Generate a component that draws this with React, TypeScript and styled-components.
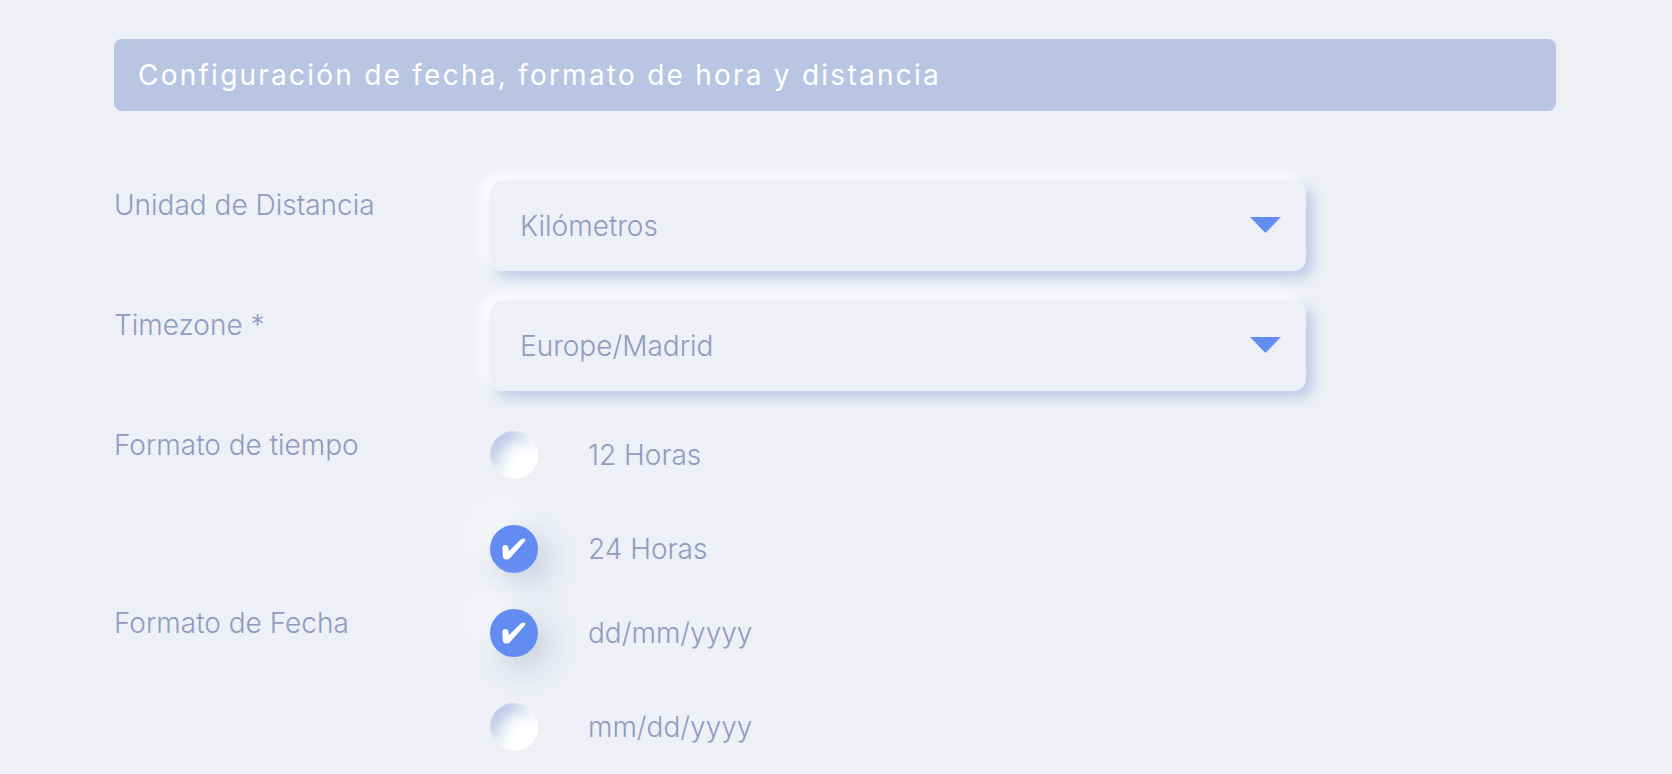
import React, { useState } from "react";
import styled, { createGlobalStyle } from "styled-components";

const GlobalStyle = createGlobalStyle`
  *, *::before, *::after { box-sizing: border-box; }
  body {
    margin: 0;
    background: #eef0f5;
    color: #8f9bc0;
    font-family: Inter, "Liberation Sans", sans-serif;
    font-size: 28px;
    font-weight: 300;
    line-height: 36px;
  }
`;

const Page = styled.main`
  padding: 39px 116px 0 114px;
`;

const Banner = styled.h1`
  margin: 0 0 70px;
  padding: 18px 24px;
  border-radius: 8px;
  background: #b8c5e3;
  color: #fff;
  font-size: 28px;
  font-weight: 400;
  line-height: 36px;
  letter-spacing: 0.08em;
`;

const Row = styled.div`
  display: grid;
  grid-template-columns: 188fr 408fr 125fr;
  align-items: start;
`;

const SelectRow = styled(Row)`
  margin-bottom: 30px;
`;

const Label = styled.label`
  padding-top: 6px;
`;

const GroupLabel = styled.span`
  padding-top: 6px;
`;

const SelectBox = styled.div`
  display: grid;

  > * { grid-area: 1 / 1; }
`;

const Select = styled.select`
  appearance: none;
  width: 100%;
  height: 90px;
  padding: 0 80px 0 30px;
  border: 0;
  border-radius: 12px;
  color: inherit;
  font: inherit;
  background: #eef0f5;
  box-shadow:
    6px 6px 14px #b8c6e6,
    -2px -2px 8px #fff,
    -6px -6px 16px #fff;
`;

const Arrow = styled.svg`
  z-index: 1;
  justify-self: end;
  width: 32px;
  height: 16px;
  margin: 36px 24px 0 0;
  pointer-events: none;
`;

const Options = styled.div`
  display: grid;
  gap: 46px;
  padding: 10px 0 26px;
`;

const Option = styled.label`
  display: flex;
  align-items: center;
  gap: 50px;
  height: 48px;
  cursor: pointer;
`;

const RadioBox = styled.span`
  display: grid;
  width: 48px;
  height: 48px;
  place-items: center;

  > * { grid-area: 1 / 1; }
`;

const Radio = styled.input`
  appearance: none;
  width: 48px;
  height: 48px;
  margin: 0;
  border-radius: 50%;
  background: #fff;
  box-shadow: inset -8px -8px 16px #fff, inset 8px 8px 16px #b8c5e6;

  &:checked {
    background: #638cf3;
    box-shadow: 10px 10px 32px rgba(125, 145, 185, 0.4), -12px -12px 40px #fff;
  }
`;

const Check = styled.svg`
  z-index: 1;
  width: 24px;
  height: 22px;
  pointer-events: none;
`;

const distances = ["Kilómetros", "Millas"];
const zones = ["Europe/Madrid", "Europe/London", "America/New_York"];

type SelectFieldProps = { id: string; label: string; items: string[] };

function SelectField({ id, label, items }: SelectFieldProps) {
  return (
    <SelectRow>
      <Label htmlFor={id}>{label}</Label>
      <SelectBox>
        <Select id={id}>
          {items.map((item) => (
            <option key={item}>{item}</option>
          ))}
        </Select>
        <Arrow viewBox="0 0 32 16" aria-hidden="true">
          <path fill="#638cf3" d="M0 0H31L15.5 16Z" />
        </Arrow>
      </SelectBox>
    </SelectRow>
  );
}

type RadioGroupProps = { label: string; name: string; options: string[]; initial: string };

function RadioGroup({ label, name, options, initial }: RadioGroupProps) {
  const [value, setValue] = useState(initial);
  return (
    <Row role="radiogroup" aria-labelledby={name + "-label"}>
      <GroupLabel id={name + "-label"}>{label}</GroupLabel>
      <Options>
        {options.map((option) => (
          <Option key={option}>
            <RadioBox>
              <Radio type="radio" name={name} checked={value === option} onChange={() => setValue(option)} />
              {value === option && (
                <Check viewBox="0 0 24 22" aria-hidden="true">
                  <path
                    fill="#fff"
                    d="M.4 10.6C.2 8.6 1.4 7.1 3.5 7.1C5.4 7.1 6.4 8.4 6.6 10.4L6.8 13.2L18 2.2C19.4.9 20.4.7 22 .8C23.5.9 23.7 2.2 22.7 3.5L8.6 19.4C7.2 20.9 6 21.6 4.2 21.5C2 21.4.9 20.1.8 17.8Z"
                  />
                </Check>
              )}
            </RadioBox>
            {option}
          </Option>
        ))}
      </Options>
    </Row>
  );
}

export default function App() {
  return (
    <>
      <GlobalStyle />
      <Page>
        <Banner>Configuración de fecha, formato de hora y distancia</Banner>
        <SelectField id="distance" label="Unidad de Distancia" items={distances} />
        <SelectField id="timezone" label="Timezone *" items={zones} />
        <RadioGroup label="Formato de tiempo" name="time" options={["12 Horas", "24 Horas"]} initial="24 Horas" />
        <RadioGroup label="Formato de Fecha" name="date" options={["dd/mm/yyyy", "mm/dd/yyyy"]} initial="dd/mm/yyyy" />
      </Page>
    </>
  );
}
